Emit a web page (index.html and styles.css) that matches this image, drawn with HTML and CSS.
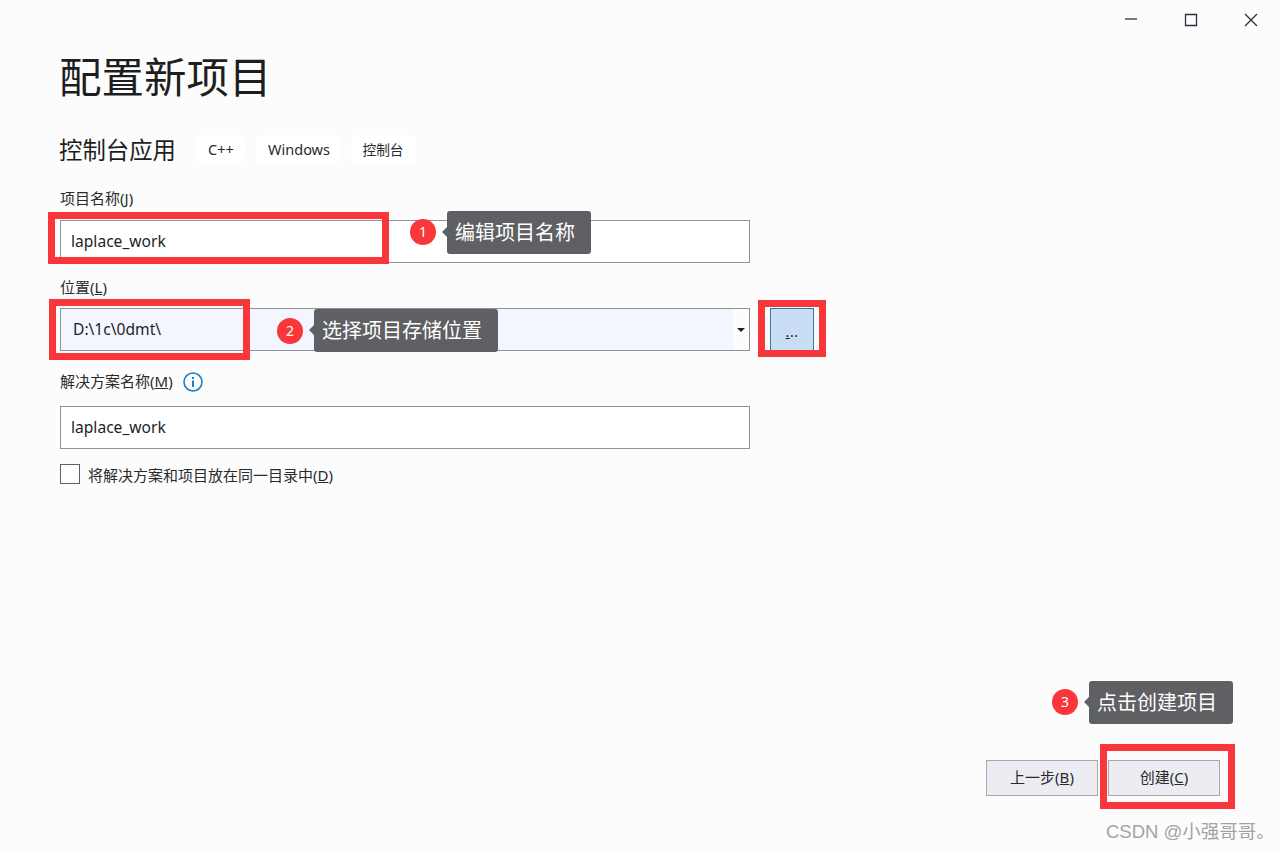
FILE: index.html
```html
<!DOCTYPE html>
<html lang="zh-CN">
<head>
    <meta charset="UTF-8">
    <title>配置新项目</title>
    <link rel="stylesheet" href="styles.css">
</head>
<body>
    <div class="window">
        <div class="titlebar">
            <svg class="win-icon" viewBox="0 0 14 14"><path d="M1 6H13"/></svg>
            <svg class="win-icon" viewBox="0 0 14 14"><path d="M1.5 1.5H12.5V12.5H1.5Z"/></svg>
            <svg class="win-icon" viewBox="0 0 14 14"><path d="M1 1L13 13M13 1L1 13"/></svg>
        </div>

        <h1>配置新项目</h1>

        <div class="template">
            <h2>控制台应用</h2>
            <span class="tag tag-cpp">C++</span>
            <span class="tag tag-win">Windows</span>
            <span class="tag tag-cn">控制台</span>
        </div>

        <div class="form">
            <div class="field-label"><span>项目名称(<u>J</u>)</span></div>
            <div class="text-box">laplace_work</div>

            <div class="field-label label-loc"><span>位置(<u>L</u>)</span></div>
            <div class="loc-row">
                <div class="combo">
                    <div class="combo-text">D:\1c\0dmt\</div>
                    <div class="combo-arrow"><span class="arrow"></span></div>
                </div>
                <div class="browse"><span><u>.</u>..</span></div>
            </div>

            <div class="field-label label-sol">
                <span>解决方案名称(<u>M</u>)</span>
                <svg class="info" viewBox="0 0 20 20">
                    <circle cx="10" cy="10" r="9" fill="none" stroke="#1b80c4" stroke-width="1.6"/>
                    <rect x="9" y="8.5" width="2" height="6.5" fill="#1b80c4"/>
                    <rect x="9" y="5" width="2" height="2" fill="#1b80c4"/>
                </svg>
            </div>
            <div class="text-box">laplace_work</div>

            <div class="check-row">
                <span class="checkbox"></span>
                <span class="check-text">将解决方案和项目放在同一目录中(<u>D</u>)</span>
            </div>
        </div>

        <div class="footer">
            <div class="btn"><span>上一步(<u>B</u>)</span></div>
            <div class="btn"><span>创建(<u>C</u>)</span></div>
        </div>

        <!-- annotations drawn on top of the dialog -->
        <div class="red-box box-1"></div>
        <div class="red-box box-2"></div>
        <div class="red-box box-3"></div>
        <div class="red-box box-4"></div>

        <div class="badge badge-1">1</div>
        <div class="badge badge-2">2</div>
        <div class="badge badge-3">3</div>

        <div class="tip tip-1">编辑项目名称</div>
        <div class="tip tip-2">选择项目存储位置</div>
        <div class="tip tip-3">点击创建项目</div>

        <div class="watermark">CSDN @小强哥哥。</div>
    </div>
</body>
</html>
```

FILE: styles.css
```css
* {
    box-sizing: border-box;
}

body {
    margin: 0;
    font-family: "Noto Sans", "Noto Sans CJK SC", sans-serif;
    color: #1e1e1e;
    background: #fcfcfd;
}

.window {
    position: relative;
    width: 1280px;
    height: 850px;
    overflow: hidden;
    display: flex;
    flex-direction: column;
    padding: 0 60px;
}

.titlebar {
    display: flex;
    justify-content: flex-end;
    gap: 46px;
    margin-right: -38px;
    padding-top: 13px;
    height: 50px;
}

.win-icon {
    width: 14px;
    height: 14px;
    fill: none;
    stroke: #2a3440;
    stroke-width: 1.3;
}

h1 {
    margin: 0 0 0 -1px;
    font-size: 42.5px;
    font-weight: 400;
    line-height: 54px;
}

.template {
    display: flex;
    align-items: center;
    margin-top: 31px;
    height: 28px;
}

h2 {
    margin: 0 20px 0 -1px;
    font-size: 23.4px;
    font-weight: 400;
    width: 117px;
    white-space: nowrap;
}

.tag {
    display: flex;
    align-items: center;
    justify-content: center;
    height: 28px;
    background: #ffffff;
    border-radius: 5px;
    font-size: 14.5px;
    color: #2a2a2a;
}

.tag-cpp {
    width: 50px;
    margin-right: 11px;
}

.tag-win {
    width: 84px;
    margin-right: 10px;
}

.tag-cn {
    width: 64px;
    font-size: 13.7px;
}

.form {
    width: 690px;
    margin-top: 25px;
}

.field-label {
    display: flex;
    align-items: center;
    gap: 10px;
    height: 22px;
    padding-bottom: 4px;
    margin-bottom: 10px;
    font-size: 15px;
    color: #2a2a2a;
}

.label-loc {
    margin-top: 14px;
    margin-bottom: 9px;
}

.label-sol {
    margin-top: 20px;
    margin-bottom: 13px;
}

.info {
    flex: none;
    width: 20px;
    height: 20px;
    margin-top: 4px;
}

.text-box {
    height: 43px;
    padding-left: 10px;
    line-height: 41px;
    font-size: 15.6px;
    background: #ffffff;
    border: 1px solid #8f929b;
}

.loc-row {
    display: flex;
    width: 754px;
}

.combo {
    display: flex;
    flex: none;
    width: 690px;
    height: 43px;
    border: 1px solid #8f929b;
    background: #f3f6fe;
}

.combo-text {
    flex: 1;
    padding-left: 12px;
    line-height: 41px;
    font-size: 15.6px;
}

.combo-arrow {
    display: flex;
    align-items: center;
    justify-content: center;
    width: 16px;
    background: #fcfcfd;
}

.arrow {
    border-left: 4px solid transparent;
    border-right: 4px solid transparent;
    border-top: 4px solid #1e1e1e;
}

.browse {
    display: flex;
    justify-content: center;
    flex: none;
    width: 44px;
    height: 43px;
    margin-left: 20px;
    background: #c9ddf5;
    border: 1px solid #1e7ac0;
    font-size: 14px;
    line-height: 46px;
    letter-spacing: 0.5px;
}

.check-row {
    display: flex;
    align-items: center;
    gap: 8px;
    margin-top: 14px;
    font-size: 15px;
    color: #2a2a2a;
}

.check-text {
    padding-top: 1px;
}

.checkbox {
    width: 20px;
    height: 20px;
    background: #ffffff;
    border: 1px solid #5f6066;
}

.footer {
    display: flex;
    justify-content: flex-end;
    gap: 10px;
    margin-top: auto;
    margin-bottom: 54px;
}

.btn {
    display: flex;
    align-items: center;
    justify-content: center;
    width: 112px;
    height: 36px;
    padding-bottom: 3px;
    background: #ecedf3;
    border: 1px solid #a8a8ac;
    font-size: 15px;
    color: #2a2a2a;
}

/* annotations */
.red-box {
    position: absolute;
    border: 7px solid #f93639;
}

.box-1 {
    left: 48px;
    top: 212px;
    width: 341px;
    height: 52px;
}

.box-2 {
    left: 49px;
    top: 299px;
    width: 201px;
    height: 61px;
}

.box-3 {
    left: 758px;
    top: 300px;
    width: 68px;
    height: 57px;
}

.box-4 {
    left: 1100px;
    top: 744px;
    width: 135px;
    height: 65px;
}

.badge {
    position: absolute;
    width: 26px;
    height: 26px;
    border-radius: 50%;
    background: #f93639;
    color: #ffffff;
    font-size: 14px;
    line-height: 25px;
    text-align: center;
}

.badge-1 {
    left: 410px;
    top: 219px;
}

.badge-2 {
    left: 277px;
    top: 318px;
}

.badge-3 {
    left: 1052px;
    top: 689px;
}

.tip {
    position: absolute;
    height: 43px;
    padding: 0 16px 0 8px;
    background: #5f6064;
    border-radius: 3px;
    color: #ffffff;
    font-size: 20px;
    line-height: 44px;
    white-space: nowrap;
}

.tip::before {
    content: "";
    position: absolute;
    left: -5px;
    top: 16px;
    border-top: 5px solid transparent;
    border-bottom: 5px solid transparent;
    border-right: 5px solid #5f6064;
}

.tip-1 {
    left: 447px;
    top: 211px;
}

.tip-2 {
    left: 314px;
    top: 309px;
}

.tip-3 {
    left: 1089px;
    top: 681px;
}

.watermark {
    position: absolute;
    left: 1106px;
    top: 817px;
    font-family: "Liberation Sans", "Noto Sans CJK SC", sans-serif;
    font-size: 18.5px;
    color: #a3a3a3;
    white-space: nowrap;
}
```
